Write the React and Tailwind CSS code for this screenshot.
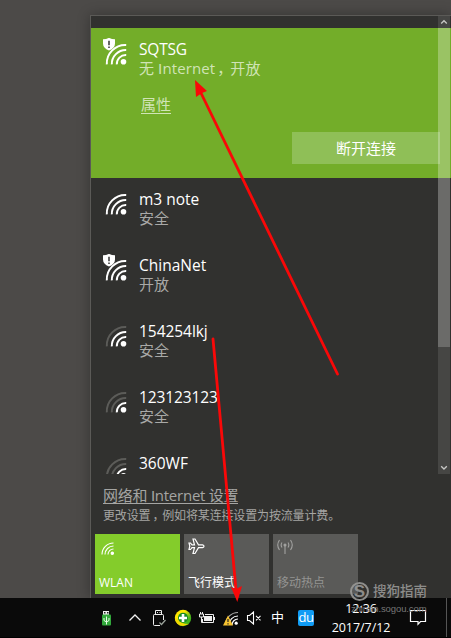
const networks = [
  { name: "m3 note", status: "安全", bars: 3, tracking: "tracking-[0px]" },
  { name: "ChinaNet", status: "开放", bars: 3, open: true, tracking: "tracking-[0px]" },
  { name: "154254lkj", status: "安全", bars: 2, tracking: "tracking-[-0.05px]" },
  { name: "123123123", status: "安全", bars: 1, tracking: "tracking-[-0.1px]" },
  { name: "360WF", status: "安全", bars: 1, tracking: "tracking-[0px]" },
];

function WifiIcon({ bars = 3, open = false }) {
  const fade = (on) => (on ? "#fff" : "#5c5c59");
  return (
    <svg width="26" height="30" viewBox="0 0 26 30" fill="none" className="shrink-0">
      <g strokeWidth="2">
        <path d="M3.8 26.4A18.5 18.5 0 0 1 23.2 7" stroke={fade(bars > 2)} />
        <path d="M8.8 26.4A14 14 0 0 1 23.2 12" stroke={fade(bars > 1)} />
        <path d="M13.8 26.4A9 9 0 0 1 23.2 17" stroke={fade(bars > 0)} />
      </g>
      <circle cx="20.5" cy="23.8" r="2.8" fill="#fff" />
      {open && (
        <>
          <path d="M0 1.2Q3.5 1.2 6 -.2Q8.5 1.2 12 1.2V5.5Q12 10 6 12.5Q0 10 0 5.5Z" fill="#fff" />
          <path d="M6 2.8V7.3M6 8.5V10" stroke="#333" strokeWidth="1.5" />
        </>
      )}
    </svg>
  );
}

// Latin capital without serifs
function Internet() {
  return (
    <>
      <span className="font-['Liberation_Sans']">I</span>nternet
    </>
  );
}

function Comma() {
  return <span className="-mr-0.5 pl-0.5">，</span>;
}

function Network({ name, status, bars, open, tracking }) {
  return (
    <div className="flex h-[66px] shrink-0 pt-2.5 pl-3">
      <WifiIcon bars={bars} open={open} />
      <div className="ml-2.5 text-[15px] leading-5 text-white">
        <div className={"h-5 pt-px text-[15.5px] " + tracking}>{name}</div>
        <div className="text-[#a9a9a7]">{status}</div>
      </div>
    </div>
  );
}

function Scrollbar() {
  return (
    <div className="absolute top-0 right-px flex h-[458px] w-3 flex-col items-center bg-white/10">
      <svg width="12" height="12" fill="none" stroke="#c8c8c6" strokeWidth="1.3" className="shrink-0">
        <path d="M3.2 7.5L6 4.7L8.8 7.5" />
      </svg>
      <div className="h-[319px] w-full bg-white/20" />
      <svg width="12" height="12" fill="none" stroke="#c8c8c6" strokeWidth="1.3" className="mt-auto shrink-0">
        <path d="M3.2 4.2L6 7L8.8 4.2" />
      </svg>
    </div>
  );
}

function Tile({ label, className, children }) {
  return (
    <div className={"flex h-[60px] w-[85px] flex-col justify-between px-1 pt-1 pb-[3px] " + className}>
      {children}
      <div className="text-[12px] leading-4 whitespace-nowrap">{label}</div>
    </div>
  );
}

function Taskbar() {
  return (
    <div className="flex h-10 items-center border-b border-black bg-[#0a0a0a] pl-[100px]">
      {/* usb stick */}
      <svg width="12" height="18" viewBox="0 0 12 18" fill="none" className="shrink-0">
        <rect x="3" y="2" width="6" height="4" fill="#eee" />
        <path d="M4 3h1.5v1.5H4zM7 3h1.5v1.5H7z" fill="#222" />
        <rect x="2" y="5.5" width="9" height="11" rx="1" fill="#32a83b" />
        <path d="M6.5 15.5V7.5M4 9V11.5L6.5 13L9 11.5V9" stroke="#e6ffe6" />
      </svg>
      <svg width="14" height="10" fill="none" stroke="#f2f2f2" strokeWidth="1.3" className="ml-4 shrink-0">
        <path d="M1.5 7.5L7 2L12.5 7.5" />
      </svg>
      <svg width="16" height="18" viewBox="0 0 16 18" fill="none" stroke="#eee" className="ml-2.5 shrink-0">
        <path d="M3.5 5.5V1.5H9.5V5.5M5 3.5H6M7.5 3.5H8.5M11.5 11V6.5Q11.5 5.5 10.5 5.5H2.5Q1.5 5.5 1.5 6.5V15.5Q1.5 16.5 2.5 16.5H8" />
        <path d="M7.5 13.5L9.5 15.5L13.5 11" stroke="#9ba39b" strokeWidth="1.3" />
      </svg>
      <svg width="18" height="18" viewBox="0 0 18 18" className="ml-[6px] shrink-0">
        <defs>
          <linearGradient id="ball" x1="0" y1="0" x2="1" y2="1">
            <stop offset=".35" stopColor="#ffe600" />
            <stop offset=".7" stopColor="#43b51d" />
          </linearGradient>
        </defs>
        <circle cx="9" cy="9" r="8.2" fill="url(#ball)" />
        <path d="M1 9A8 8 0 0 0 9 17L15 15Q6 15 4 10Z" fill="#f2d900" />
        <circle cx="9" cy="8.7" r="5" fill="#178a24" />
        <path d="M9 5v8M5 9h8" stroke="#fff" strokeWidth="2.6" />
      </svg>
      {/* battery with plug */}
      <svg width="18" height="14" viewBox="0 0 18 14" fill="none" stroke="#eee" className="ml-[6px] shrink-0">
        <path d="M2.5 1V3M4.5 1V3M1.5 3V6H5.5V3ZM3.5 6V11.5H5" />
        <path d="M7 3.5H15.5V11.5H4.5V8M16.5 6V9" />
        <rect x="6.5" y="5.5" width="7" height="4" fill="#eee" />
      </svg>
      <svg width="16" height="16" viewBox="0 0 16 16" fill="none" className="ml-[7px] shrink-0">
        <g strokeWidth="1.2">
          <path d="M2.5 15A12.5 12.5 0 0 1 15 2.5" stroke="#aaa" />
          <path d="M6 15A9 9 0 0 1 15 6" stroke="#fff" />
          <path d="M9 15A6 6 0 0 1 15 9" stroke="#fff" />
        </g>
        <circle cx="13.2" cy="13.2" r="1.6" fill="#fff" />
        <path d="M5 5.5L10 15.5H0Z" fill="#f7c331" />
        <path d="M5 9V12M5 13.2V14.4" stroke="#222" strokeWidth="1.2" />
      </svg>
      <svg width="16" height="14" viewBox="0 0 16 14" fill="none" stroke="#fff" strokeWidth="1.1" className="ml-[7px] shrink-0">
        <path d="M1.5 4.5H3.5L7.5 1V13L3.5 9.5H1.5ZM10 4.8L14.5 9.3M14.5 4.8L10 9.3" />
      </svg>
      <div className="ml-[9px] text-[13px] leading-none text-white">中</div>
      <div className="ml-[14px] flex size-4 items-center justify-center rounded-xs bg-[#119cf5] pb-px text-[13px] leading-none tracking-[-0.5px] text-white">
        du
      </div>
      <div className="ml-4 w-[62px] text-center text-[12.5px] leading-[19px] tracking-[-0.05px] whitespace-nowrap text-white">
        <div>12:36</div>
        <div>2017/7/12</div>
      </div>
      <svg width="18" height="17" viewBox="0 0 18 17" fill="none" stroke="#fff" strokeWidth="1.2" className="ml-[17px] shrink-0">
        <path d="M1.5 1.5H16.5V12.5H11.5L9 15.3V12.5H1.5Z" />
      </svg>
      <div className="mr-1 ml-auto h-full w-px bg-[#555]" />
    </div>
  );
}

function Watermark() {
  return (
    <div className="absolute top-[582px] left-[350px] w-[80px] text-[#999997]/90">
      <div className="flex items-center gap-1">
        <div className="flex size-[19px] shrink-0 items-center justify-center rounded-full border-2 border-current font-['Liberation_Sans'] text-[17px] leading-none font-bold">
          S
        </div>
        <div className="text-[13.5px] leading-[19px] font-medium whitespace-nowrap">搜狗指南</div>
      </div>
      <div className="mt-px pl-px font-['Liberation_Sans'] text-[9.5px] leading-[14px] tracking-[-0.1px] text-[#777]">
        zhinan.sogou.com
      </div>
    </div>
  );
}

function Arrows() {
  return (
    <svg width="451" height="638" className="pointer-events-none absolute inset-0">
      <g stroke="#f90808" strokeWidth="2.8" strokeLinecap="round">
        <path d="M337.5 374L201 93" />
        <path d="M213 339L236 590" />
      </g>
      <path d="M195 80L207 91L202 93L196 97Z" fill="#f90808" />
      <path d="M237.3 602L231 587L236 589L242 586Z" fill="#f90808" />
    </svg>
  );
}

export default function App() {
  return (
    <div className="relative h-[638px] w-[451px] overflow-hidden bg-[#4c4a48] font-['Open_Sans','Noto_Sans_CJK_SC',sans-serif]">
      <div className="h-[598px] pt-[15px] pl-[90px]">
        <div className="relative h-[583px] border-t border-l border-[#5b5a57] bg-[#31312f] shadow-[0_0_12px_rgba(0,0,0,0.3)]">
          <div className="h-[458px] overflow-hidden pt-3">
            <div className="flex h-[150px] flex-col bg-[#73ad29] pt-2.5 pl-3">
              <div className="flex">
                <WifiIcon open />
                <div className="ml-2.5 text-[15px] leading-5 text-white">
                  <div className="h-5 pt-px text-[15.5px] tracking-[-0.2px]">SQTSG</div>
                  <div className="h-5 tracking-[0.1px] text-[#d0e4b6]">
                    无 <Internet />
                    <Comma />
                    开放
                  </div>
                </div>
              </div>
              <div className="mt-[18px] ml-[38px] w-fit border-b border-[#d0e4b6] text-[15px] leading-[17px] text-[#d0e4b6]">
                属性
              </div>
              <div className="mt-[18px] mr-[11px] flex h-8 w-[148px] items-center justify-center self-end bg-[#8fbf57] text-[15px] text-white">
                断开连接
              </div>
            </div>
            {networks.map((network) => (
              <Network key={network.name} {...network} />
            ))}
          </div>
          <Scrollbar />
          <div className="pt-[13px] pl-3 text-[#a5a5a3]">
            <div className="h-[17px] w-fit border-b border-[#a5a5a3] text-[15px] leading-4 tracking-[-0.25px] whitespace-nowrap">
              网络和 <Internet /> 设置
            </div>
            <div className="mt-1 h-4 text-[12px] leading-4 tracking-[-0.15px] whitespace-nowrap">
              更改设置
              <Comma />
              例如将某连接设置为按流量计费。
            </div>
          </div>
          <div className="mt-[10px] flex gap-1 pl-1">
            <Tile label="WLAN" className="bg-[#84cc2b] text-white">
              <svg width="14" height="14" viewBox="0 0 14 14" fill="none" stroke="#fff" strokeWidth="1.1" className="mt-1 ml-0.5">
                <path d="M1 12.5A11.5 11.5 0 0 1 12.5 1M4 12.5A8.5 8.5 0 0 1 12.5 4M7 12.5A5.5 5.5 0 0 1 12.5 7" />
                <circle cx="11.3" cy="11.3" r="1.2" fill="#fff" />
              </svg>
            </Tile>
            <Tile label="飞行模式" className="bg-[#5a5a58] text-white">
              <svg width="17" height="17" viewBox="0 0 17 17" fill="none" stroke="#fff" strokeWidth="1.2">
                <path d="M1 5H2.5L4 6.8H6.5L5 1H7L10.5 6.8H14.5Q16 7.2 16 8.2Q16 9.2 14.5 9.6H10.5L7 15.5H5L6.5 9.6H4L2.5 11.5H1L1.8 8.2Z" />
              </svg>
            </Tile>
            <Tile label="移动热点" className="bg-[#5a5a58] text-[#949492]">
              <svg width="16" height="17" viewBox="0 0 16 17" fill="none" stroke="#a2a2a0" strokeWidth="1.1">
                <path d="M8 7V16M5 4.5Q3.3 7 5 9.5M11 4.5Q12.7 7 11 9.5M2.5 2Q-1 7 2.5 12M13.5 2Q17 7 13.5 12" />
                <circle cx="8" cy="7" r="1" fill="#a2a2a0" />
              </svg>
            </Tile>
          </div>
        </div>
      </div>
      <div className="relative">
        <Taskbar />
      </div>
      <Watermark />
      <Arrows />
    </div>
  );
}
